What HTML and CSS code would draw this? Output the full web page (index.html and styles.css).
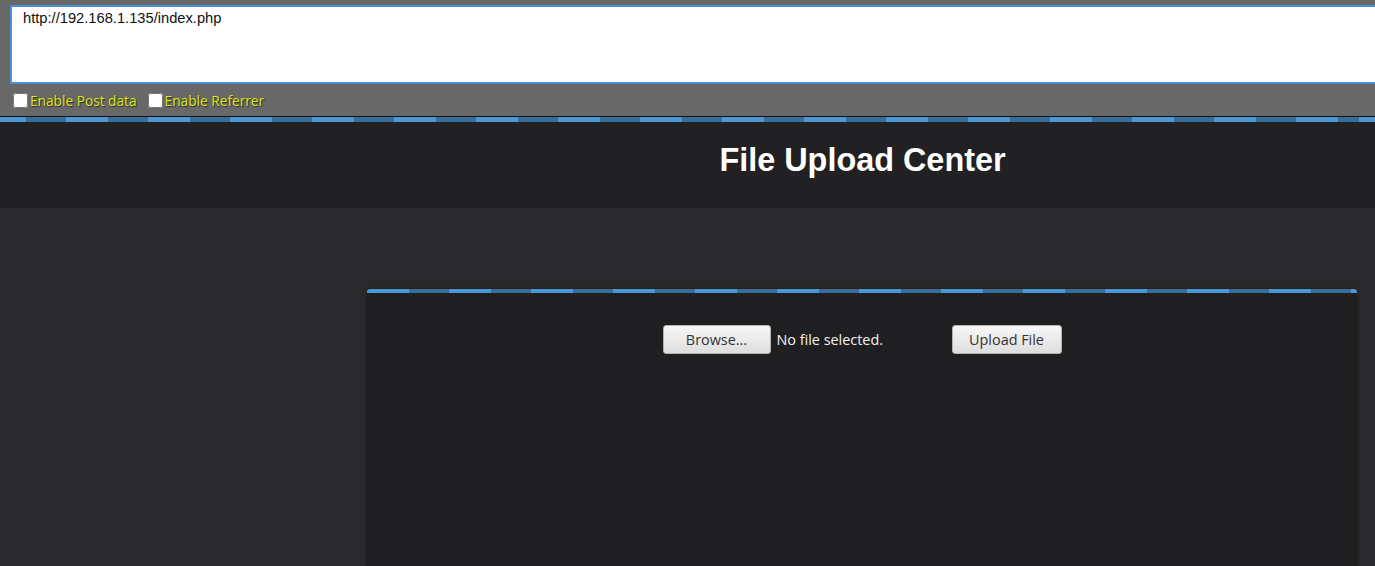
FILE: index.html
```html
<!DOCTYPE html>
<html lang="en">
<head>
    <meta charset="UTF-8">
    <meta name="viewport" content="width=device-width, initial-scale=1.0">
    <title>File Upload Center</title>
    <link rel="stylesheet" href="styles.css">
</head>
<body>
    <div class="toolbar">
        <textarea class="url-box" spellcheck="false">http://192.168.1.135/index.php</textarea>
        <div class="options">
            <label><input type="checkbox"> Enable Post data</label>
            <label><input type="checkbox"> Enable Referrer</label>
        </div>
    </div>
    <div class="stripe"></div>

    <div class="header">
        <h1>File Upload Center</h1>
    </div>

    <div class="main">
        <div class="panel">
            <form class="upload-form" action="index.php" method="post" enctype="multipart/form-data">
                <span class="file-pick">
                    <button type="button" class="btn">Browse...</button>
                    <span class="file-name">No file selected.</span>
                </span>
                <button type="submit" class="btn btn-upload">Upload File</button>
            </form>
        </div>
    </div>
</body>
</html>
```

FILE: styles.css
```css
body {
    margin: 0;
    background: #29292b;
    font-family: "Open Sans", "Liberation Sans", sans-serif;
    overflow: hidden;
}
.toolbar {
    background: #686868;
    height: 111px;
    padding: 5px 0 0 10px;
    border-bottom: 1px solid #141414;
    overflow: hidden;
}
.url-box {
    display: block;
    box-sizing: border-box;
    width: 1380px;
    height: 79px;
    margin: 0;
    padding: 3px 11px;
    border: 2px solid #4a90d9;
    border-right: none;
    background: #fff;
    color: #111;
    font-family: "Liberation Sans", Arial, sans-serif;
    font-size: 14.7px;
    resize: none;
    outline: none;
}
.options {
    display: flex;
    gap: 10px;
    margin-top: 7px;
    margin-left: 2px;
}
.options label {
    display: flex;
    align-items: center;
    color: #dce812;
    font-size: 13.7px;
    text-shadow: 1px 1px 1px #2a2a2a;
}
.options input {
    width: 15px;
    height: 15px;
    margin: 0 2px 0 1px;
}
.stripe {
    height: 5px;
    background: repeating-linear-gradient(90deg, #4b97d4 0 42px, #386e99 42px 82px);
    background-position: -16px 0;
}
.header {
    background: #212123;
    height: 86px;
    padding-left: 350px;
    display: flex;
    align-items: center;
    justify-content: center;
}
.header h1 {
    margin: 0 0 9px;
    color: #fff;
    font-family: "Liberation Sans", Arial, sans-serif;
    font-size: 32.4px;
    font-weight: bold;
}
.main {
    padding: 81px 18px 0 367px;
}
.panel {
    height: 300px;
    background: #1f1f21;
    border-top: 4px solid transparent;
    border-radius: 3px 3px 0 0;
    background-image:
        repeating-linear-gradient(90deg, #4b97d4 0 42px, #386e99 42px 82px);
    background-size: 100% 4px;
    background-repeat: no-repeat;
    background-origin: border-box;
    box-shadow: 0 0 3px rgba(0, 0, 0, 0.5);
}
.upload-form {
    display: flex;
    justify-content: center;
    align-items: center;
    padding-top: 32px;
}
.file-pick {
    display: flex;
    align-items: center;
    width: 289px;
}
.file-name {
    color: #f2f2f2;
    font-size: 14.4px;
    margin-left: 6px;
}
.btn {
    box-sizing: border-box;
    height: 29px;
    width: 108px;
    padding: 0;
    border: 1px solid #b3b3b3;
    border-radius: 3px;
    background: linear-gradient(#f7f7f7, #dedede);
    color: #333;
    font-family: "Open Sans", "Liberation Sans", sans-serif;
    font-size: 14.4px;
    cursor: pointer;
}
.btn-upload {
    width: 110px;
}
```
